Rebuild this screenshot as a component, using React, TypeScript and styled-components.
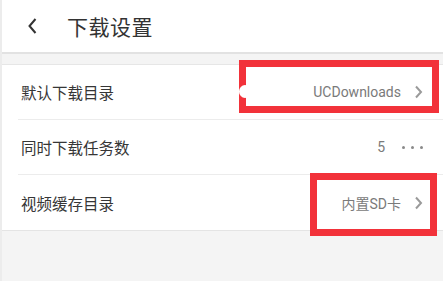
import React from 'react';
import styled, { createGlobalStyle } from 'styled-components';

const GlobalStyle = createGlobalStyle`
  html, body {
    margin: 0;
    padding: 0;
    background: #f4f4f4;
  }
  body {
    font-family: Roboto, "Noto Sans CJK SC", sans-serif;
  }
`;

const Page = styled.div`
  position: relative;
  width: 443px;
  height: 281px;
  overflow: hidden;
  background: #f4f4f4;
  border-left: 2px solid #ececec;
  box-sizing: border-box;
`;

const Header = styled.header`
  height: 52px;
  display: flex;
  align-items: center;
  padding-left: 25px;
  gap: 29px;
  background: #fff;
  border-bottom: 2px solid #e2e2e2;
`;

const Title = styled.h1`
  margin: 0;
  font-size: 21px;
  font-weight: 400;
  color: #333;
  letter-spacing: 0.5px;
`;

const List = styled.section`
  margin-top: 10px;
  background: #fff;
  border-top: 1px solid #e6e6e6;
  border-bottom: 1px solid #e4e4e4;
`;

const Row = styled.div<{ $last?: boolean }>`
  height: 55px;
  display: flex;
  align-items: center;
  justify-content: space-between;
  margin-left: 16px;
  padding: 0 20px 0 3px;
  border-bottom: ${p => (p.$last ? 'none' : '1px solid #ececec')};
  box-sizing: border-box;
`;

const Label = styled.span`
  font-size: 15.5px;
  color: #363636;
`;

const Value = styled.span`
  display: flex;
  align-items: center;
  gap: 13px;
  font-size: 14px;
  color: #7a7a7a;
`;

const Dots = styled.span`
  display: flex;
  gap: 6px;
  margin-left: 4px;
  & > i {
    width: 3px;
    height: 3px;
    border-radius: 50%;
    background: #8a8a8a;
  }
`;

const Mark = styled.div<{ $x: number; $y: number; $w: number; $h: number }>`
  position: absolute;
  left: ${p => p.$x}px;
  top: ${p => p.$y}px;
  width: ${p => p.$w}px;
  height: ${p => p.$h}px;
  border: 7px solid #f2323a;
  box-sizing: border-box;
`;

const Blot = styled.div`
  position: absolute;
  left: 237px;
  top: 85px;
  width: 12px;
  height: 13px;
  border-radius: 50%;
  background: #fff;
`;

const Chevron: React.FC = () => (
  <svg width="9" height="14" viewBox="0 0 9 14">
    <path d="M2 1.5 L7 7 L2 12.5" fill="none" stroke="#9a9a9a" strokeWidth="2" />
  </svg>
);

const Back: React.FC = () => (
  <svg width="11" height="16" viewBox="0 0 11 16">
    <path d="M8.5 1 L2.5 8 L8.5 15" fill="none" stroke="#333" strokeWidth="2" />
  </svg>
);

export default function App() {
  return (
    <Page>
      <GlobalStyle />
      <Header>
        <Back />
        <Title>下载设置</Title>
      </Header>
      <List>
        <Row>
          <Label>默认下载目录</Label>
          <Value>
            UCDownloads
            <Chevron />
          </Value>
        </Row>
        <Row>
          <Label>同时下载任务数</Label>
          <Value>
            5
            <Dots>
              <i />
              <i />
              <i />
            </Dots>
          </Value>
        </Row>
        <Row $last>
          <Label>视频缓存目录</Label>
          <Value>
            内置SD卡
            <Chevron />
          </Value>
        </Row>
      </List>
      <Mark $x={237} $y={60} $w={200} $h={53} />
      <Blot />
      <Mark $x={308} $y={173} $w={127} $h={63} />
    </Page>
  );
}
